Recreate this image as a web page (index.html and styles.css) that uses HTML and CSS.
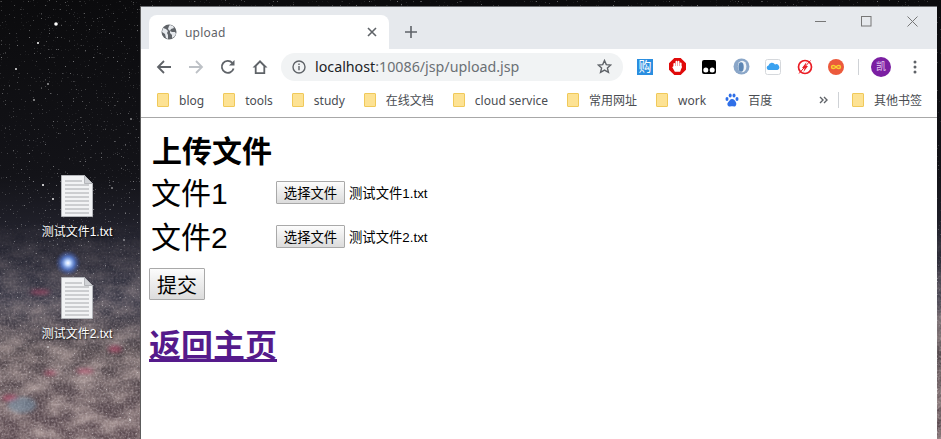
FILE: index.html
```html
<!DOCTYPE html>
<html lang="zh">
<head>
  <meta charset="UTF-8">
  <title>upload</title>
  <link rel="stylesheet" href="styles.css">
</head>
<body>

  <!-- wallpaper -->
  <svg class="wallpaper" viewBox="0 0 941 439" preserveAspectRatio="none">
    <defs>
      <linearGradient id="sky" x1="0" y1="0" x2="0" y2="1">
        <stop offset="0" stop-color="#0b0b0d"/>
        <stop offset="0.4" stop-color="#131318"/>
        <stop offset="0.55" stop-color="#24242f"/>
        <stop offset="0.68" stop-color="#3b3a48"/>
        <stop offset="0.8" stop-color="#544a4e"/>
        <stop offset="1" stop-color="#5e4c52"/>
      </linearGradient>
      <radialGradient id="glow">
        <stop offset="0" stop-color="#fff"/>
        <stop offset="0.2" stop-color="#bcd6ff"/>
        <stop offset="0.5" stop-color="#5f8ae8" stop-opacity="0.75"/>
        <stop offset="1" stop-color="#3a4a90" stop-opacity="0"/>
      </radialGradient>
      <filter id="specks" x="0" y="0" width="100%" height="100%">
        <feTurbulence type="fractalNoise" baseFrequency="0.75" numOctaves="1" seed="11"/>
        <feColorMatrix values="0 0 0 0 1  0 0 0 0 1  0 0 0 0 1  9 0 0 0 -6.2"/>
      </filter>
      <filter id="clouds" x="0" y="0" width="100%" height="100%">
        <feTurbulence type="fractalNoise" baseFrequency="0.04 0.07" numOctaves="4" seed="7"/>
        <feColorMatrix values="0 0 0 0 0.55  0 0 0 0 0.44  0 0 0 0 0.42  1.3 0 0 0 -0.4"/>
      </filter>
      <filter id="grain" x="0" y="0" width="100%" height="100%">
        <feTurbulence type="fractalNoise" baseFrequency="0.5" numOctaves="2" seed="4"/>
        <feColorMatrix values="0 0 0 0 0.72  0 0 0 0 0.62  0 0 0 0 0.64  0.9 0 0 0 -0.33"/>
      </filter>
      <filter id="soft"><feGaussianBlur stdDeviation="2"/></filter>
      <linearGradient id="fade" x1="0" y1="0" x2="0" y2="1">
        <stop offset="0.5" stop-color="#000"/>
        <stop offset="0.85" stop-color="#fff"/>
      </linearGradient>
      <mask id="lower">
        <rect width="941" height="439" fill="url(#fade)"/>
      </mask>
    </defs>
    <rect width="941" height="439" fill="url(#sky)"/>
    <rect width="941" height="439" filter="url(#clouds)" mask="url(#lower)"/>
    <rect width="941" height="439" filter="url(#grain)" mask="url(#lower)"/>
    <rect width="941" height="439" filter="url(#specks)" opacity="0.4"/>
    <g fill="#c4456a" opacity="0.6" filter="url(#soft)">
      <ellipse cx="115" cy="349" rx="7" ry="3"/>
      <ellipse cx="85" cy="371" rx="9" ry="2"/>
      <ellipse cx="10" cy="398" rx="8" ry="3"/>
      <ellipse cx="50" cy="373" rx="6" ry="2"/>
      <ellipse cx="40" cy="292" rx="10" ry="2"/>
    </g>
    <ellipse cx="22" cy="405" rx="14" ry="8" fill="#7fa0b8" opacity="0.5" filter="url(#soft)"/>
    <circle cx="68" cy="263" r="13" fill="url(#glow)"/>
    <g fill="#fff">
      <circle cx="56" cy="24" r="1.8"/><circle cx="38" cy="43" r="1"/><circle cx="16" cy="69" r="0.9"/>
      <circle cx="48" cy="84" r="0.8"/><circle cx="34" cy="100" r="0.8"/><circle cx="131" cy="119" r="0.7"/>
      <circle cx="43" cy="185" r="1"/><circle cx="53" cy="199" r="0.9"/><circle cx="112" cy="188" r="0.7"/>
      <circle cx="124" cy="240" r="0.7"/><circle cx="48" cy="347" r="0.8"/><circle cx="130" cy="420" r="0.8"/>
    </g>
  </svg>

  <!-- desktop files -->
  <div class="desk-files">
    <div class="desk-file">
      <svg class="doc" width="36" height="44" viewBox="0 0 36 44">
        <path d="M2.5 1.5h23l8 8v33h-31z" fill="#f2f3f5" stroke="#b4b6ba"/>
        <path d="M25.5 1.5v8h8z" fill="#d0d2d6" stroke="#b4b6ba"/>
        <path d="M6 7h17M6 11h24M6 15h24M6 19h24M6 23h24M6 27h24M6 31h24M6 35h24M6 39h24" stroke="#a6a8ac"/>
      </svg>
      <span>测试文件1.txt</span>
    </div>
    <div class="desk-file">
      <svg class="doc" width="36" height="44" viewBox="0 0 36 44">
        <path d="M2.5 1.5h23l8 8v33h-31z" fill="#f2f3f5" stroke="#b4b6ba"/>
        <path d="M25.5 1.5v8h8z" fill="#d0d2d6" stroke="#b4b6ba"/>
        <path d="M6 7h17M6 11h24M6 15h24M6 19h24M6 23h24M6 27h24M6 31h24M6 35h24M6 39h24" stroke="#a6a8ac"/>
      </svg>
      <span>测试文件2.txt</span>
    </div>
  </div>

  <div class="window">

    <div class="tabstrip">
      <div class="tab">
        <svg width="16" height="16" viewBox="0 0 16 16">
          <circle cx="8" cy="8" r="7.5" fill="#5f6368"/>
          <path d="M2 4l3 1 2 2-1 2 1 2v4l-2-1-1-4-3-2zM9 1l3 1 1 2-3 1-1 2 2 1 3 0 1 2-2 3-2 1 0-3-2-2 0-2-2-2 1-3z" fill="#e6e9ed"/>
        </svg>
        <span class="tab-title">upload</span>
        <svg class="tab-close" width="10" height="10" viewBox="0 0 10 10">
          <path d="M1 1l8 8M9 1l-8 8" stroke="#5f6368" stroke-width="1.6"/>
        </svg>
      </div>
      <svg class="new-tab" width="12" height="12" viewBox="0 0 12 12">
        <path d="M6 0v12M0 6h12" stroke="#5f6368" stroke-width="1.6"/>
      </svg>
      <div class="win-controls">
        <svg width="11" height="11" viewBox="0 0 11 11"><path d="M0 5.5h11" stroke="#777"/></svg>
        <svg width="11" height="11" viewBox="0 0 11 11"><rect x="0.5" y="0.5" width="9.5" height="9.5" fill="none" stroke="#777"/></svg>
        <svg width="11" height="11" viewBox="0 0 11 11"><path d="M0.5 0.5l10 10M10.5 0.5l-10 10" stroke="#777"/></svg>
      </div>
    </div>

    <div class="toolbar">
      <div class="nav-btns">
        <svg width="16" height="16" viewBox="0 0 16 16"><path d="M15 8H2M8 2L2 8l6 6" fill="none" stroke="#5f6368" stroke-width="1.8"/></svg>
        <svg width="16" height="16" viewBox="0 0 16 16"><path d="M1 8h13M8 2l6 6-6 6" fill="none" stroke="#bdc1c6" stroke-width="1.8"/></svg>
        <svg width="16" height="16" viewBox="0 0 16 16"><path d="M13.6 9.5A6 6 0 1 1 12.3 3.8" fill="none" stroke="#5f6368" stroke-width="1.8"/><path d="M14.5 1v5.5H9z" fill="#5f6368"/></svg>
        <svg width="16" height="16" viewBox="0 0 16 16"><path d="M8 1L.5 8.500h2.300V15h10.400V8.500h2.300zM4.600 13.300V7.200L8 3.800l3.400 3.400v6.100z" fill="#5f6368"/></svg>
      </div>
      <div class="omnibox">
        <svg width="14" height="14" viewBox="0 0 14 14"><circle cx="7" cy="7" r="6" fill="none" stroke="#5f6368" stroke-width="1.4"/><path d="M7 6v4.200M7 3.400v1.500" stroke="#5f6368" stroke-width="1.4"/></svg>
        <span class="url"><b>localhost</b>:10086/jsp/upload.jsp</span>
        <svg class="star" width="15" height="15" viewBox="0 0 16 16"><path d="M8 1.600l1.900 4.400 4.800.4-3.600 3.200 1.100 4.700L8 11.800l-4.200 2.500 1.100-4.700L1.300 6.400l4.800-.4z" fill="none" stroke="#5f6368" stroke-width="1.5"/></svg>
      </div>
      <div class="extensions">
        <span class="ext-gou">购</span>
        <svg width="17" height="17" viewBox="0 0 16 16"><path d="M5 0h6l5 5v6l-5 5H5l-5-5V5z" fill="#e00a0a"/><path d="M5 5.500V9M7 3.500V8M9 3.500V8M11 5V9" stroke="#fff" stroke-width="1.700" stroke-linecap="round"/><path d="M4.200 8l-1.200.5L5.500 13h5l1.400-4V7.500H4.200z" fill="#fff"/></svg>
        <svg width="16" height="16" viewBox="0 0 16 16"><path d="M3 1h10a2 2 0 0 1 2 2v10a2 2 0 0 1-2 2H3a2 2 0 0 1-2-2V3a2 2 0 0 1 2-2z" fill="#000"/><circle cx="4.800" cy="11" r="2.500" fill="#fff"/><circle cx="11.200" cy="11" r="2.500" fill="#fff"/></svg>
        <svg width="17" height="17" viewBox="0 0 16 16"><circle cx="8" cy="8" r="7.500" fill="#8aa6c8"/><ellipse cx="8.600" cy="8" rx="4" ry="5.500" fill="#eef3f8"/><ellipse cx="7.600" cy="8.500" rx="2.500" ry="4.500" fill="#5d86b4"/></svg>
        <svg width="16" height="16" viewBox="0 0 16 16"><rect x="0.500" y="0.500" width="15" height="15" rx="2" fill="#fff" stroke="#d5d8dc"/><path d="M3.500 11a2.300 2.300 0 0 1 0-4.500A3.500 3.500 0 0 1 10 5.500a2.800 2.800 0 0 1 2.500 5.500z" fill="#3aa2f0"/></svg>
        <svg width="16" height="16" viewBox="0 0 16 16"><circle cx="8" cy="8" r="6.500" fill="#fff" stroke="#ea1c24" stroke-width="1.700"/><path d="M9.500 3L5 9h2.500L6.500 13 11 7H8.500z" fill="#ea1c24"/><path d="M13.500 1.500L2 14.500" stroke="#ea1c24"/></svg>
        <svg width="16" height="16" viewBox="0 0 16 16"><circle cx="8" cy="8" r="8" fill="#ec5a3c"/><path d="M8 8c-1.500-2-4.500-2-4.500 0s3 2 4.500 0 4.500-2 4.500 0-3 2-4.500 0z" fill="none" stroke="#f8d030" stroke-width="1.400"/></svg>
      </div>
      <i class="sep"></i>
      <span class="avatar">凯</span>
      <svg class="menu" width="4" height="14" viewBox="0 0 4 14"><circle cx="2" cy="2" r="1.500" fill="#5f6368"/><circle cx="2" cy="7" r="1.500" fill="#5f6368"/><circle cx="2" cy="12" r="1.500" fill="#5f6368"/></svg>
    </div>

    <div class="bookmarks">
      <a class="bm"><i class="folder"></i>blog</a>
      <a class="bm"><i class="folder"></i>tools</a>
      <a class="bm"><i class="folder"></i>study</a>
      <a class="bm"><i class="folder"></i>在线文档</a>
      <a class="bm"><i class="folder"></i>cloud service</a>
      <a class="bm"><i class="folder"></i>常用网址</a>
      <a class="bm"><i class="folder"></i>work</a>
      <a class="bm bm-baidu">
        <svg width="14" height="14" viewBox="0 0 14 14" fill="#2f6fe8"><ellipse cx="2" cy="6" rx="1.500" ry="2"/><ellipse cx="5.200" cy="2.500" rx="1.500" ry="2"/><ellipse cx="9" cy="2.500" rx="1.500" ry="2"/><ellipse cx="12" cy="6" rx="1.500" ry="2"/><path d="M7 6c-2 0-2.500 2-4 3.500S3 14 5 13.500s2.500-.5 4 0 3-2 2-4S9 6 7 6z"/></svg>
        百度
      </a>
      <div class="bm-right">
        <svg width="9" height="8" viewBox="0 0 9 8"><path d="M1 1l3 3-3 3M5 1l3 3-3 3" fill="none" stroke="#5f6368" stroke-width="1.400"/></svg>
        <i class="sep"></i>
        <a class="bm"><i class="folder"></i>其他书签</a>
      </div>
    </div>

    <main class="page">
      <h2 class="page-title">上传文件</h2>
      <div class="file-row">
        <label class="file-label">文件1</label>
        <button class="file-btn">选择文件</button>
        <span class="file-name">测试文件1.txt</span>
      </div>
      <div class="file-row">
        <label class="file-label">文件2</label>
        <button class="file-btn">选择文件</button>
        <span class="file-name">测试文件2.txt</span>
      </div>
      <button class="submit-btn">提交</button>
      <h1 class="back"><a href="#">返回主页</a></h1>
    </main>
  </div>

</body>
</html>
```
FILE: styles.css
```css
html, body {
  margin: 0;
  height: 100%;
  overflow: hidden;
  background: #0c0c0e;
  font-family: "Liberation Sans", "Noto Sans CJK SC", sans-serif;
}
.wallpaper {
  position: absolute;
  top: 0;
  left: 0;
  width: 941px;
  height: 439px;
}

/* desktop files */
.desk-files {
  position: absolute;
  top: 174px;
  left: 27px;
  width: 100px;
  display: flex;
  flex-direction: column;
  gap: 36px;
}
.desk-file {
  display: flex;
  flex-direction: column;
  align-items: center;
  gap: 6px;
  color: #fff;
  font-size: 12px;
  line-height: 16px;
  text-shadow: 1px 1px 2px #000;
}
.doc {
  display: block;
}

/* browser window */
.window {
  position: absolute;
  top: 6px;
  left: 140px;
  width: 797px;
  height: 433px;
  display: flex;
  flex-direction: column;
  background: #fff;
  border-left: 1px solid #5c5c5c;
  box-sizing: border-box;
}
.tabstrip {
  display: flex;
  align-items: flex-end;
  height: 43px;
  padding-left: 8px;
  background: #e6e9ed;
  border-top: 1px solid #6e7074;
  box-sizing: border-box;
}
.tab {
  display: flex;
  align-items: center;
  width: 240px;
  height: 34px;
  padding: 0 12px;
  box-sizing: border-box;
  background: #fff;
  border-radius: 8px 8px 0 0;
  font-family: "Noto Sans", sans-serif;
  font-size: 12px;
  color: #5f6368;
}
.tab-title {
  margin-left: 8px;
  letter-spacing: 0.2px;
}
.tab-close {
  margin-left: auto;
}
.new-tab {
  margin: 0 0 11px 16px;
}
.win-controls {
  display: flex;
  gap: 35px;
  margin-left: auto;
  margin-right: 19px;
  align-self: flex-start;
  margin-top: 9px;
}

.toolbar {
  display: flex;
  align-items: center;
  height: 35px;
  padding-left: 15px;
}
.nav-btns {
  display: flex;
  gap: 16px;
}
.omnibox {
  display: flex;
  align-items: center;
  width: 342px;
  height: 28px;
  margin-left: 13px;
  padding: 0 11px;
  box-sizing: border-box;
  border-radius: 14px;
  background: #f1f3f4;
}
.url {
  margin-left: 9px;
  font-family: "Noto Sans", sans-serif;
  font-size: 14.25px;
  color: #6b7075;
}
.url b {
  font-weight: normal;
  color: #202124;
}
.star {
  margin-left: auto;
}
.extensions {
  display: flex;
  align-items: center;
  gap: 15.5px;
  margin-left: 14px;
}
.ext-gou {
  display: block;
  width: 16px;
  height: 16px;
  background: #2a8ee0;
  color: #fff;
  font-size: 13px;
  line-height: 16px;
  text-align: center;
}
.sep {
  display: block;
  width: 1px;
  height: 16px;
  background: #cfd2d6;
}
.toolbar .sep {
  margin-left: 14px;
}
.avatar {
  width: 20px;
  height: 20px;
  margin-left: 12px;
  border-radius: 50%;
  background: #7b1fa2;
  color: #e6cdf0;
  font-size: 10px;
  line-height: 20px;
  text-align: center;
}
.menu {
  margin-left: 22px;
}

.bookmarks {
  display: flex;
  align-items: center;
  gap: 19px;
  height: 34px;
  padding: 0 0 1px 16px;
  box-sizing: border-box;
  border-bottom: 1px solid #a8a8a8;
  font-family: "Noto Sans", "Noto Sans CJK SC", sans-serif;
  font-size: 12px;
  color: #4a4d52;
}
.bm {
  display: flex;
  align-items: center;
  gap: 10px;
}
.bm-baidu {
  gap: 9px;
}
.folder {
  display: block;
  width: 10px;
  height: 12px;
  background: #fde293;
  border: 1px solid #f0c95a;
  border-radius: 1px;
}
.bm-right {
  display: flex;
  align-items: center;
  gap: 10px;
  margin-left: auto;
  margin-right: 15px;
}
.bm-right .sep {
  margin-right: 3px;
}

/* page content */
.page {
  flex: 1;
  padding: 0 8px;
  color: #000;
}
.page-title {
  margin: 14px 0 0 3px;
  font-size: 30px;
  line-height: 40px;
  font-weight: bold;
}
.file-row {
  display: flex;
  align-items: center;
  height: 44px;
  padding-left: 2px;
}
.file-label {
  width: 125px;
  font-size: 30px;
  line-height: 44px;
}
.file-btn {
  width: 69px;
  height: 23px;
  margin-bottom: 4px;
  padding: 0;
  border: 1px solid #a9a9a9;
  border-radius: 1px;
  background: linear-gradient(#fcfcfc, #dcdcdc);
  font-family: inherit;
  font-size: 13.33px;
  color: #000;
}
.file-name {
  margin: 0 0 4px 4px;
  font-size: 13.33px;
}
.submit-btn {
  display: block;
  width: 56px;
  height: 32px;
  margin-top: 8px;
  padding: 0;
  border: 1px solid #a9a9a9;
  border-radius: 1px;
  background: linear-gradient(#fcfcfc, #dcdcdc);
  font-family: inherit;
  font-size: 20px;
  color: #000;
}
.back {
  margin: 24px 0 0;
  font-size: 32px;
  line-height: 44px;
}
.back a {
  color: #551a8b;
}
```
